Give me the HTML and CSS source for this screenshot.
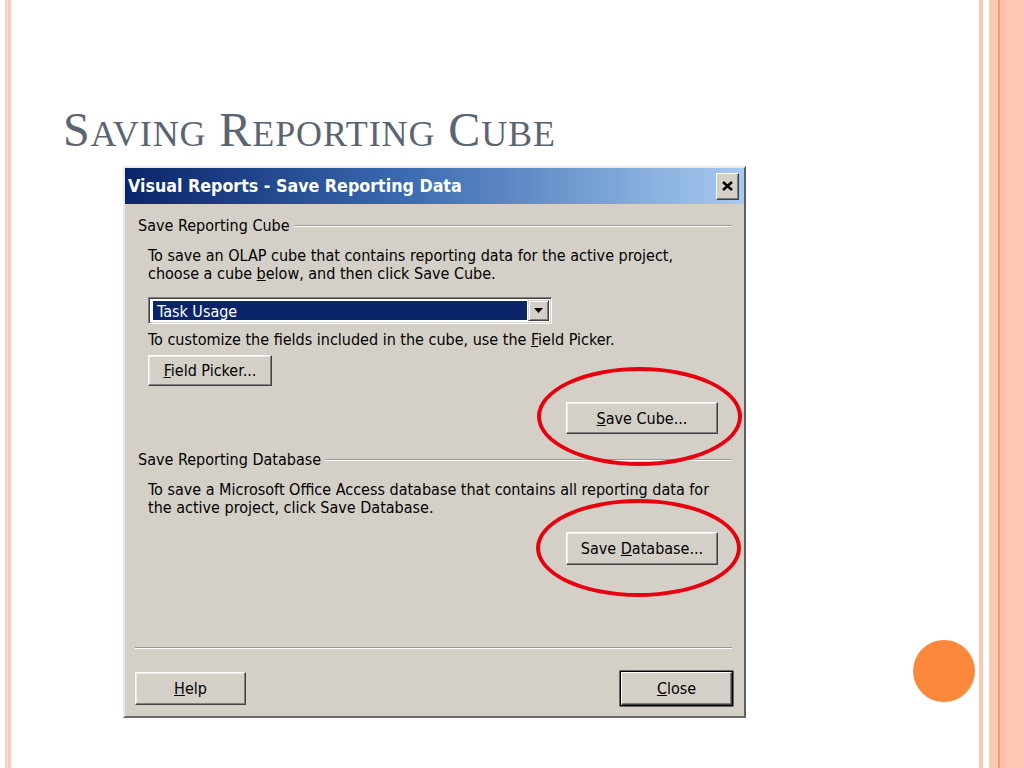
FILE: index.html
```html
<!DOCTYPE html>
<html>
<head>
<meta charset="utf-8">
<link rel="stylesheet" href="styles.css">
</head>
<body>
<div class="slide">
  <h1 class="title">S<span class="sc">AVING</span> R<span class="sc">EPORTING</span> C<span class="sc">UBE</span></h1>
  <div class="dialog">
    <div class="titlebar">
      <span class="caption">Visual Reports - Save Reporting Data</span>
      <span class="xbtn"><svg width="11" height="10" viewBox="0 0 11 10"><path d="M1 1 L10 9 M10 1 L1 9" stroke="#000" stroke-width="2.4" fill="none"/></svg></span>
    </div>
    <div class="body">
      <div class="group-head">Save Reporting Cube</div>
      <div class="indent">
        <p class="para">To save an OLAP cube that contains reporting data for the active project,<br>choose a cube <u>b</u>elow, and then click Save Cube.</p>
        <div class="combo">
          <div class="combo-value">Task Usage</div>
          <div class="combo-btn"><svg width="9" height="5" viewBox="0 0 9 5"><path d="M0 0 H9 L4.5 5 Z" fill="#000"/></svg></div>
        </div>
        <p class="hint">To customize the fields included in the cube, use the <u>F</u>ield Picker.</p>
        <div class="btn btn-field"><span><u>F</u>ield Picker...</span></div>
      </div>
      <div class="action action-cube">
        <div class="btn btn-wide"><span><u>S</u>ave Cube...</span></div>
        <span class="ring"></span>
      </div>
      <div class="group-head group-db">Save Reporting Database</div>
      <div class="indent">
        <p class="para">To save a Microsoft Office Access database that contains all reporting data for<br>the active project, click Save Database.</p>
      </div>
      <div class="action action-db">
        <div class="btn btn-wide btn-tall"><span>Save <u>D</u>atabase...</span></div>
        <span class="ring"></span>
      </div>
      <div class="separator"></div>
      <div class="footer">
        <div class="btn btn-foot"><span><u>H</u>elp</span></div>
        <div class="btn btn-foot btn-default"><span><u>C</u>lose</span></div>
      </div>
    </div>
  </div>
  <span class="dot"></span>
</div>
</body>
</html>
```

FILE: styles.css
```css
html, body {
  margin: 0;
  padding: 0;
  background: #fff;
}

.slide {
  position: relative;
  width: 1024px;
  height: 768px;
  box-sizing: border-box;
  padding: 106px 0 0 63px;
  overflow: hidden;
  background: linear-gradient(to right,
    #fff 0 5px,
    #fbcfbd 5px 7px,
    #fde6dc 7px 8px,
    #fbc9b4 8px 11px,
    #fff 11px 979px,
    #fbc9b4 979px 983px,
    #fff 983px 989px,
    #fcc8b2 989px 998px,
    #f19c72 998px 1000px,
    #fbc1a8 1000px 1007px,
    #fcc8b2 1007px 1024px);
}

.title {
  margin: 0;
  height: 48px;
  font-family: "Liberation Serif", serif;
  font-weight: normal;
  font-size: 48px;
  line-height: 48px;
  letter-spacing: 0.9px;
  color: #5b6471;
  white-space: nowrap;
}

.sc {
  font-size: 36px;
  line-height: 36px;
}

.dialog {
  width: 623px;
  height: 552px;
  margin: 12px 0 0 60px;
  box-sizing: border-box;
  background: #d4d0c8;
  border: 2px solid;
  border-color: #ebe9e4 #5f5f5f #6a6a6a #ebe9e4;
  display: flex;
  flex-direction: column;
  font-family: "DejaVu Sans Condensed", "DejaVu Sans", sans-serif;
  font-stretch: semi-condensed;
  font-size: 16px;
  color: #000;
}

.titlebar {
  height: 36px;
  flex: none;
  display: flex;
  align-items: center;
  justify-content: space-between;
  padding: 0 5px 0 3px;
  background: linear-gradient(to right, #0a246a 0%, #3a6ab0 45%, #a6caf0 100%);
  color: #fff;
  font-weight: bold;
  font-size: 17.7px;
}

.xbtn {
  width: 23px;
  height: 27px;
  box-sizing: border-box;
  display: flex;
  align-items: center;
  justify-content: center;
  background: #d4d0c8;
  border: 1px solid;
  border-color: #fff #404040 #404040 #fff;
  box-shadow: inset -1px -1px #808080;
}

.body {
  flex: 1;
  display: flex;
  flex-direction: column;
  padding: 0 12px 0 13px;
}

.group-head {
  display: flex;
  align-items: center;
  gap: 4px;
  margin-top: 13px;
  line-height: 18px;
  white-space: nowrap;
}

.group-head::after {
  content: "";
  flex: 1;
  height: 0;
  border-top: 1px solid #9a9a9a;
  border-bottom: 1px solid #fff;
}

.group-db {
  margin-top: 17px;
}

.indent {
  padding-left: 10px;
  display: flex;
  flex-direction: column;
  align-items: flex-start;
}

.para {
  margin: 12px 0 0;
  line-height: 18px;
  white-space: nowrap;
}

.combo {
  margin-top: 14px;
  width: 404px;
  height: 27px;
  box-sizing: border-box;
  display: flex;
  align-items: stretch;
  padding: 2px;
  background: #fff;
  border: 1px solid;
  border-color: #808080 #fff #fff #808080;
  box-shadow: inset 1px 1px #404040, inset -1px -1px #d4d0c8;
}

.combo-value {
  flex: 1;
  margin: 1px 1px 1px 2px;
  padding-left: 4px;
  background: #0a246a;
  color: #fff;
  line-height: 21px;
}

.combo-btn {
  width: 21px;
  box-sizing: border-box;
  display: flex;
  align-items: center;
  justify-content: center;
  background: #d4d0c8;
  border: 1px solid;
  border-color: #d4d0c8 #404040 #404040 #d4d0c8;
  box-shadow: inset 1px 1px #fff, inset -1px -1px #808080;
}

.hint {
  margin: 7px 0 0;
  line-height: 18px;
  white-space: nowrap;
}

.btn {
  box-sizing: border-box;
  display: flex;
  align-items: center;
  justify-content: center;
  background: #d4d0c8;
  border: 1px solid;
  border-color: #fff #404040 #404040 #fff;
  box-shadow: inset -1px -1px #808080, inset 1px 1px #ecebe6;
  white-space: nowrap;
}

.btn-field {
  margin-top: 6px;
  width: 124px;
  height: 31px;
}

.action {
  position: relative;
  align-self: flex-end;
  margin-right: 14px;
}

.action-cube {
  margin-top: 16px;
}

.action-db {
  margin-top: 15px;
}

.btn-wide {
  width: 152px;
  height: 32px;
}

.btn-tall {
  height: 33px;
}

.ring {
  position: absolute;
  left: -29px;
  top: -35px;
  width: 205px;
  height: 99px;
  box-sizing: border-box;
  border: 4px solid #e8000e;
  border-radius: 50%;
  pointer-events: none;
}

.action-db .ring {
  left: -30px;
  top: -33px;
  height: 98px;
}

.separator {
  margin: 82px 0 0 -3px;
  height: 0;
  border-top: 1px solid #9a9a9a;
  border-bottom: 1px solid #fff;
}

.footer {
  margin: 23px 0 0 -3px;
  display: flex;
  justify-content: space-between;
}

.btn-foot {
  width: 111px;
  height: 33px;
}

.btn-default {
  border-color: #fff #404040 #404040 #fff;
  box-shadow: inset -1px -1px #808080, 0 0 0 1.5px #000;
}

.dot {
  position: absolute;
  left: 913px;
  top: 640px;
  width: 62px;
  height: 62px;
  border-radius: 50%;
  background: #fc893b;
}
```
